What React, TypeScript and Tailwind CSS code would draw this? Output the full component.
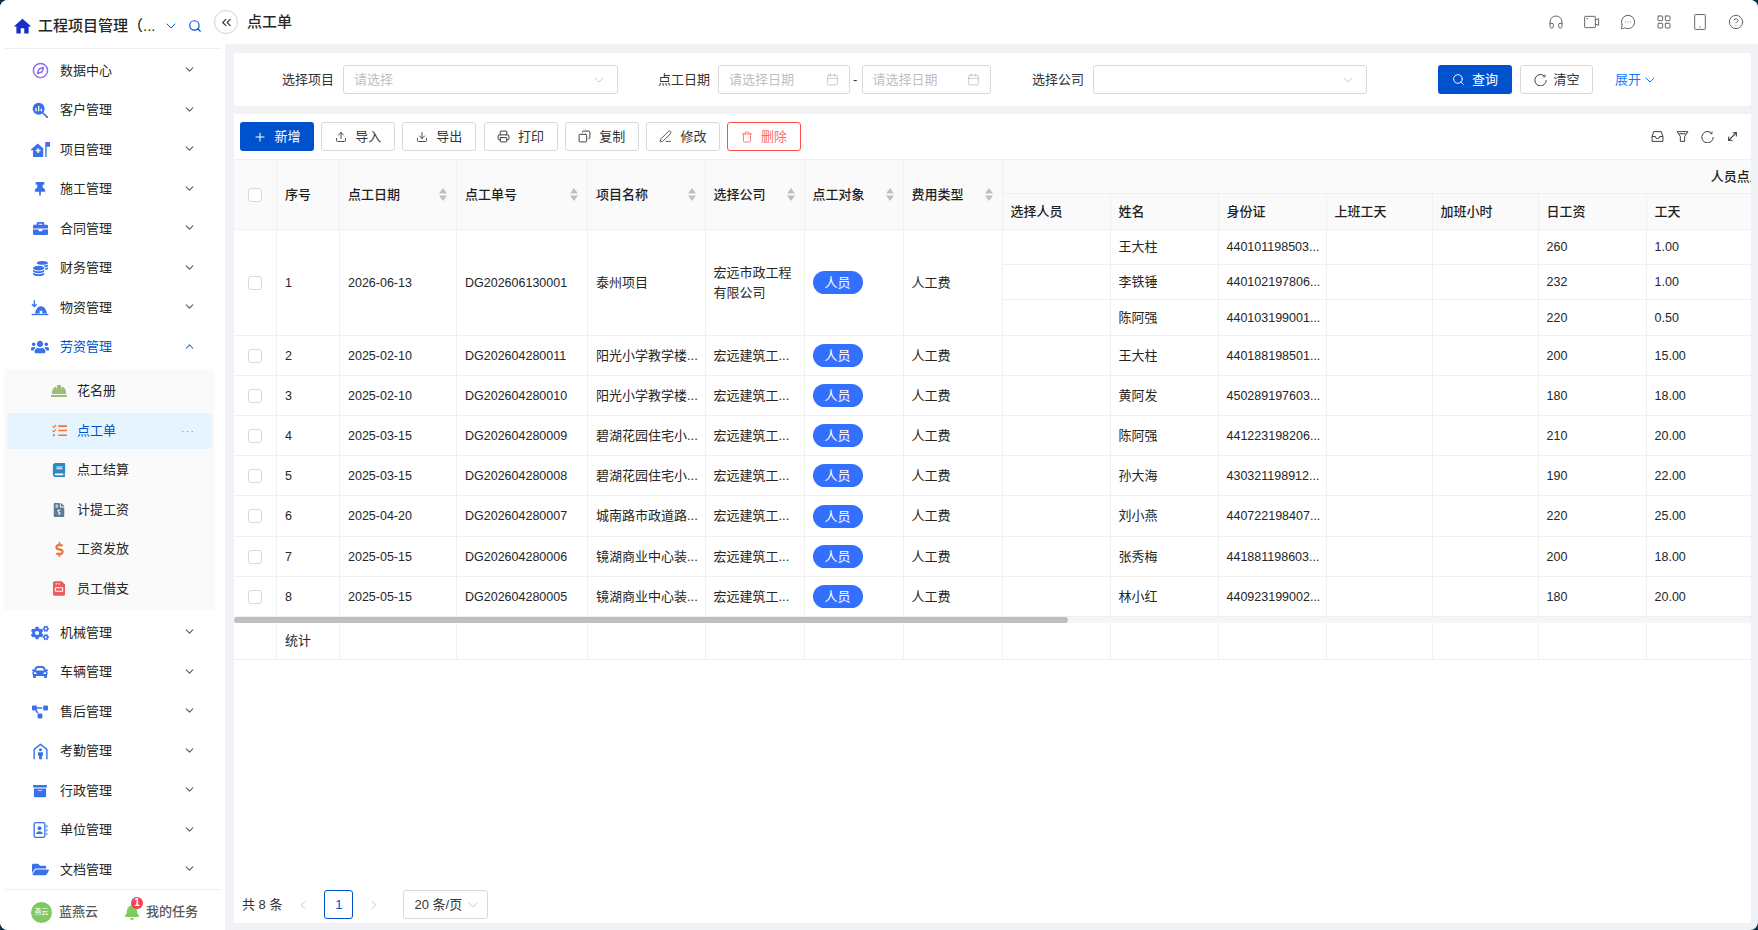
import React from 'react';
import {
  ChevronDown, ChevronUp, ChevronLeft, ChevronRight, ChevronsLeft, Search, Compass, Headphones, MessageCircleMore,
  LayoutGrid, CircleHelp, Calendar, Plus, Upload, Download, Printer, Copy, PenLine, Trash, MoveDiagonal,
} from 'lucide-react';
import {
  FaThumbtack, FaBriefcase, FaCoins, FaUsers, FaHardHat, FaBook, FaFileInvoiceDollar, FaDollarSign, FaCogs,
  FaCar, FaProjectDiagram, FaArchive, FaFolderOpen, FaBell,
} from 'react-icons/fa';
import { MdHome } from 'react-icons/md';

// custom icons that the packages don't have
const QueryChartIcon = () => (
  <svg width="16" height="16" viewBox="0 0 24 24">
    <circle cx="10" cy="10" r="9" fill="#3b71e8" />
    <path d="M6 9v5M10 6v8M14 10v4" stroke="#fff" strokeWidth="2" />
    <path d="M16.5 16.5L23 23" stroke="#3b71e8" strokeWidth="2.6" strokeLinecap="round" />
  </svg>
);

const HouseFlagIcon = () => (
  <svg width="19" height="17" viewBox="0 0 28 24">
    <path d="M0 12L10 3l8 7v13H3V13H0z" fill="#3b71e8" />
    <path d="M10.5 10v7M7 13.500h7" stroke="#fff" strokeWidth="2.2" />
    <path d="M21 1h7v7h-5v15h-2z" fill="#3b71e8" />
  </svg>
);

const TentArrowIcon = () => (
  <svg width="18" height="17" viewBox="0 0 27 24">
    <path d="M1 22.500h25" stroke="#3b71e8" strokeWidth="2" />
    <path d="M6 21c1-6 4-11 9-11s8 5 9 11h-7v-4h-4v4z" fill="#3b71e8" />
    <path d="M5 1v9M1.500 7L5 10.500 8.500 7" stroke="#3b71e8" strokeWidth="2" fill="none" />
  </svg>
);

const AttendanceIcon = () => (
  <svg width="15" height="17" viewBox="0 0 21 24" fill="none">
    <path d="M1.500 23V9L10.500 2l9 7v14" stroke="#3b71e8" strokeWidth="2" />
    <circle cx="10.500" cy="9.500" r="2.200" fill="#3b71e8" />
    <path d="M7 13h7v5h-1.500v5h-4v-5H7z" fill="#3b71e8" />
  </svg>
);

const AddressCardIcon = () => (
  <svg width="15" height="16" viewBox="0 0 21 24" fill="none">
    <rect x="1" y="1" width="16" height="22" rx="2.500" stroke="#3b71e8" strokeWidth="2" />
    <circle cx="9" cy="9.500" r="3" fill="#3b71e8" />
    <path d="M4 18c.5-3 2.500-4 5-4s4.500 1 5 4z" fill="#3b71e8" />
    <path d="M20 5v3M20 11v3M20 17v2" stroke="#3b71e8" strokeWidth="1.800" />
  </svg>
);

const CheckListIcon = () => (
  <svg width="15" height="13" viewBox="0 0 24 20" fill="none" stroke="#f0743e">
    <path d="M1 3l2 2 3.500-4M1 10l2 2 3.500-4" strokeWidth="1.800" />
    <circle cx="3" cy="17.500" r="1.800" fill="#f0743e" stroke="none" />
    <path d="M10 3h14M10 10h14M10 17.500h14" strokeWidth="2.600" />
  </svg>
);

const RedDocIcon = () => (
  <svg width="12" height="15" viewBox="0 0 18 22">
    <path d="M2.500 0H13l5 5v14.500a2.500 2.500 0 0 1-2.500 2.500h-13A2.500 2.500 0 0 1 0 19.500v-17A2.500 2.500 0 0 1 2.500 0z" fill="#ea5b5f" />
    <path d="M4 3h2v2H4zM8 3h2v2H8z" fill="#fff" />
    <rect x="3.500" y="10" width="11" height="5" rx="1" fill="none" stroke="#fff" strokeWidth="1.600" />
  </svg>
);

const VideoBoxIcon = () => (
  <svg width="16" height="16" viewBox="0 0 24 24" fill="none" stroke="#666" strokeWidth="1.500">
    <rect x="1" y="3.500" width="16" height="17" rx="1" />
    <path d="M17 9l5-2v10l-5-2M4 7h2" />
  </svg>
);

const PhoneIcon = () => (
  <svg width="16" height="16" viewBox="0 0 24 24" fill="none" stroke="#666" strokeWidth="1.500">
    <rect x="4" y="0.800" width="16" height="22.400" rx="1" />
    <path d="M11 19.500h2" />
  </svg>
);

const BoxIcon = () => (
  <svg width="13" height="13" viewBox="0 0 24 24" fill="none" stroke="#333" strokeWidth="1.750">
    <path d="M2 12L5 3h14l3 9v9H2z" />
    <path d="M2 12h6a4 4 0 0 0 8 0h6" />
  </svg>
);

const FunnelIcon = () => (
  <svg width="13" height="13" viewBox="0 0 24 24" fill="none" stroke="#333" strokeWidth="1.750">
    <path d="M2 3h20l-6 9v9H8v-9zM6 7h12" />
  </svg>
);

// open ring, the refresh glyph has almost no arrow head
const RefreshArc: React.FC<{ size: number }> = ({ size }) => (
  <svg width={size} height={size} viewBox="0 0 24 24" fill="none" stroke="currentColor" strokeWidth="1.750">
    <path d="M20 6.500A10.500 10.500 0 1 0 22.500 13" />
    <path d="M20.500 2.500v4.500h-4" strokeWidth="1.250" />
  </svg>
);

const SortCaret = () => (
  <svg width="8" height="13" viewBox="0 0 8 13" className="shrink-0" fill="#bfbfbf">
    <path d="M4 0l4 5.500H0zM4 13L0 7.500h8z" />
  </svg>
);

const CheckBox = () => <span className="block h-[14px] w-[14px] rounded-[3px] border border-[#d9d9d9] bg-white mx-auto" />;

interface MenuEntry {
  label: string;
  icon: React.ReactNode;
}

const blue = '#3b71e8';

const topMenus: MenuEntry[] = [
  { label: '数据中心', icon: <Compass size={17} color="#8b6cf6" strokeWidth={2} /> },
  { label: '客户管理', icon: <QueryChartIcon /> },
  { label: '项目管理', icon: <HouseFlagIcon /> },
  { label: '施工管理', icon: <FaThumbtack size={14} color={blue} /> },
  { label: '合同管理', icon: <FaBriefcase size={15} color={blue} /> },
  { label: '财务管理', icon: <FaCoins size={15} color={blue} /> },
  { label: '物资管理', icon: <TentArrowIcon /> },
];

const subMenus: MenuEntry[] = [
  { label: '花名册', icon: <FaHardHat size={16} color="#9dbd70" /> },
  { label: '点工单', icon: <CheckListIcon /> },
  { label: '点工结算', icon: <FaBook size={14} color="#2a8bc5" /> },
  { label: '计提工资', icon: <FaFileInvoiceDollar size={14} color="#5f7a99" /> },
  { label: '工资发放', icon: <FaDollarSign size={15} color="#f0743e" /> },
  { label: '员工借支', icon: <RedDocIcon /> },
];

const bottomMenus: MenuEntry[] = [
  { label: '机械管理', icon: <FaCogs size={18} color={blue} /> },
  { label: '车辆管理', icon: <FaCar size={16} color={blue} /> },
  { label: '售后管理', icon: <FaProjectDiagram size={16} color={blue} /> },
  { label: '考勤管理', icon: <AttendanceIcon /> },
  { label: '行政管理', icon: <FaArchive size={14} color={blue} /> },
  { label: '单位管理', icon: <AddressCardIcon /> },
  { label: '文档管理', icon: <FaFolderOpen size={17} color={blue} /> },
];

const MenuRow: React.FC<{ item: MenuEntry; open?: boolean }> = ({ item, open }) => (
  <div className="flex h-[39.5px] items-center pl-[30px] pr-[29px]">
    <span className="flex w-5 justify-center">{item.icon}</span>
    <span className={`ml-[10px] ${open ? 'text-[#0052cc]' : 'text-[#262626]'}`}>{item.label}</span>
    {open ? (
      <ChevronUp size={13} color="#3b71e8" strokeWidth={2} className="ml-auto -mt-0.5" />
    ) : (
      <ChevronDown size={13} color="#595959" strokeWidth={2} className="ml-auto -mt-0.5" />
    )}
  </div>
);

const Sidebar = () => (
  <aside className="flex w-[225px] shrink-0 flex-col bg-white text-[13px] leading-5">
    <div className="mx-1 flex h-[49px] shrink-0 items-center border-b border-[#f0f0f0] pl-[8px] pt-1">
      <MdHome size={21} color="#1530c8" />
      <span className="ml-[5px] w-[122px] whitespace-nowrap text-[15px] font-medium text-[#262626]">工程项目管理（...</span>
      <ChevronDown size={16} color="#0052cc" strokeWidth={1.5} className="ml-[3px]" />
      <Search size={14} color="#0052cc" strokeWidth={2} className="ml-[9px]" />
    </div>
    <div className="h-[840px] shrink-0 pt-[1.75px]">
      {topMenus.map(m => <MenuRow key={m.label} item={m} />)}
      <MenuRow item={{ label: '劳资管理', icon: <FaUsers size={18} color={blue} /> }} open />
      <div className="mx-1 mt-[2.500px] mb-[3px] flex w-[211px] flex-col gap-[3.5px] bg-[#fafafa] pt-1 pb-[3px]">
        {subMenus.map(m => {
          const active = m.label === '点工单';
          return (
            <div key={m.label} className={`mx-[3px] flex h-9 items-center rounded-[3px] pl-[42px] pr-[17px] ${active ? 'bg-[#e6f4ff]' : ''}`}>
              <span className="flex w-[20px] justify-center">{m.icon}</span>
              <span className={`ml-2 ${active ? 'text-[#0052cc]' : 'text-[#262626]'}`}>{m.label}</span>
              {active && <span className="ml-auto text-[11px] tracking-[1px] text-[#5b93e8]">···</span>}
            </div>
          );
        })}
      </div>
      {bottomMenus.map(m => <MenuRow key={m.label} item={m} />)}
    </div>
    <div className="mx-1 flex h-[41px] shrink-0 items-center border-t border-[#f0f0f0] pl-[27px] pt-[4px]">
      <span className="flex h-[21px] w-[21px] items-center justify-center rounded-full bg-[#82c860] text-[7px] text-white">燕云</span>
      <span className="ml-[7px] font-medium text-[#595959]">蓝燕云</span>
      <span className="relative ml-[26px] flex">
        <FaBell size={16} color="#7ecb5f" />
        <span className="absolute -top-[7px] left-[7px] flex h-[12px] w-[12px] items-center justify-center rounded-full bg-[#f5424d] text-[10px] font-bold leading-none text-white">1</span>
      </span>
      <span className="ml-[6px] font-medium text-[#595959]">我的任务</span>
    </div>
  </aside>
);

const Header = () => (
  <header className="flex h-11 shrink-0 items-center justify-between bg-white pl-[22px] pr-[14px]">
    <h1 className="text-[15px] font-medium text-[#262626]">点工单</h1>
    <div className="flex items-center gap-5 text-[#666]">
      <Headphones size={16} strokeWidth={1.5} />
      <VideoBoxIcon />
      <MessageCircleMore size={16} strokeWidth={1.5} />
      <LayoutGrid size={16} strokeWidth={1.5} />
      <PhoneIcon />
      <CircleHelp size={16} strokeWidth={1.5} />
    </div>
  </header>
);

const boxClass = 'flex h-[29px] items-center justify-between rounded-[3px] border border-[#d9d9d9] bg-white px-[10px]';

const DateBox: React.FC<{ className: string }> = ({ className }) => (
  <div className={`${boxClass} ${className}`}>
    <span className="text-[#bfbfbf]">请选择日期</span>
    <Calendar size={13} color="#bfbfbf" strokeWidth={1.5} />
  </div>
);

const SearchBar = () => (
  <section className="flex h-[53px] shrink-0 items-center rounded-[2px] bg-white pl-[48px] text-[13px] leading-5 text-[#333]">
    <span>选择项目</span>
    <div className={`${boxClass} ml-[9px] w-[275px]`}>
      <span className="text-[#bfbfbf]">请选择</span>
      <ChevronDown size={16} color="#bfbfbf" strokeWidth={1.25} />
    </div>
    <span className="ml-[40px]">点工日期</span>
    <DateBox className="ml-[8px] w-[131.500px]" />
    <span className="mx-[3.500px] w-[5px]">-</span>
    <DateBox className="w-[129.500px]" />
    <span className="ml-[41px]">选择公司</span>
    <div className={`${boxClass} ml-[9px] w-[274px] justify-end`}>
      <ChevronDown size={16} color="#bfbfbf" strokeWidth={1.25} />
    </div>
    <button className="ml-[71px] flex h-[29px] w-[74px] items-center justify-center gap-[7px] rounded-[3px] bg-[#0052cc] text-white">
      <Search size={13} strokeWidth={1.75} />
      查询
    </button>
    <button className="ml-[8px] flex h-[29px] w-[73px] items-center justify-center gap-[7px] rounded-[3px] border border-[#d9d9d9] text-[#333]">
      <RefreshArc size={13} />
      清空
    </button>
    <span className="ml-[22px] flex items-center gap-[1px] text-[#1677ff]">
      展开
      <ChevronDown size={16} strokeWidth={1.5} />
    </span>
  </section>
);

const toolButtons = [
  { label: '导入', icon: <Upload size={12} strokeWidth={1.75} /> },
  { label: '导出', icon: <Download size={12} strokeWidth={1.75} /> },
  { label: '打印', icon: <Printer size={13} strokeWidth={1.75} /> },
  { label: '复制', icon: <Copy size={13} strokeWidth={1.75} className="-scale-x-100" /> },
  { label: '修改', icon: <PenLine size={13} strokeWidth={1.5} /> },
];

const Toolbar = () => (
  <div className="mb-2 flex h-[29px] shrink-0 items-center pl-[6px] pr-[12px] text-[13px] leading-5">
    <div className="flex gap-[7.200px]">
      <button className="flex h-[29px] w-[74px] items-center justify-center gap-[7px] rounded-[3px] bg-[#0052cc] text-white">
        <Plus size={14} strokeWidth={1.75} />
        新增
      </button>
      {toolButtons.map(b => (
        <button key={b.label} className="flex h-[29px] w-[74px] items-center justify-center gap-2 rounded-[3px] border border-[#d9d9d9] text-[#333]">
          {b.icon}
          {b.label}
        </button>
      ))}
      <button className="flex h-[29px] w-[74px] items-center justify-center gap-2 rounded-[3px] border border-[#ff4d4f] text-[#ff6b6d]">
        <Trash size={12} strokeWidth={1.75} />
        删除
      </button>
    </div>
    <div className="ml-auto flex items-center gap-3 text-[#333]">
      <BoxIcon />
      <FunnelIcon />
      <RefreshArc size={13} />
      <MoveDiagonal size={13} strokeWidth={2} />
    </div>
  </div>
);

const columnWidths = [43, 63, 117, 131, 117.5, 99, 99, 99, 108, 108, 108, 106, 106, 108, 108, 717.5];
const tableWidth = 2238;

const Cols = () => (
  <colgroup>
    {columnWidths.map((w, i) => <col key={i} style={{ width: w }} />)}
  </colgroup>
);

const thBase = 'border-r border-b border-[#f0f0f0] bg-[#fafafa] px-2 font-medium text-[#1f1f1f]';
const th = `${thBase} text-left`;
const td = 'border-r border-b border-[#f0f0f0] px-2 text-[#262626] whitespace-nowrap';
const num = 'border-r border-b border-[#f0f0f0] px-2 text-[12.5px] text-[#262626] whitespace-nowrap';

const sortHeads = ['点工日期', '点工单号', '项目名称', '选择公司', '点工对象', '费用类型'];
const subHeads = ['选择人员', '姓名', '身份证', '上班工天', '加班小时', '日工资', '工天'];

interface Worker {
  name: string;
  idCard: string;
  wage: string;
  days: string;
}

const firstOrder: Worker[] = [
  { name: '王大柱', idCard: '440101198503...', wage: '260', days: '1.00' },
  { name: '李铁锤', idCard: '440102197806...', wage: '232', days: '1.00' },
  { name: '陈阿强', idCard: '440103199001...', wage: '220', days: '0.50' },
];

const orders = [
  { no: 2, date: '2025-02-10', code: 'DG202604280011', project: '阳光小学教学楼...', name: '王大柱', idCard: '440188198501...', wage: '200', days: '15.00' },
  { no: 3, date: '2025-02-10', code: 'DG202604280010', project: '阳光小学教学楼...', name: '黄阿发', idCard: '450289197603...', wage: '180', days: '18.00' },
  { no: 4, date: '2025-03-15', code: 'DG202604280009', project: '碧湖花园住宅小...', name: '陈阿强', idCard: '441223198206...', wage: '210', days: '20.00' },
  { no: 5, date: '2025-03-15', code: 'DG202604280008', project: '碧湖花园住宅小...', name: '孙大海', idCard: '430321198912...', wage: '190', days: '22.00' },
  { no: 6, date: '2025-04-20', code: 'DG202604280007', project: '城南路市政道路...', name: '刘小燕', idCard: '440722198407...', wage: '220', days: '25.00' },
  { no: 7, date: '2025-05-15', code: 'DG202604280006', project: '镜湖商业中心装...', name: '张秀梅', idCard: '441881198603...', wage: '200', days: '18.00' },
  { no: 8, date: '2025-05-15', code: 'DG202604280005', project: '镜湖商业中心装...', name: '林小红', idCard: '440923199002...', wage: '180', days: '20.00' },
];

const PersonTag = () => (
  <span className="block h-[23px] w-[50px] rounded-[12px] bg-[#3370ff] text-center leading-[23px] text-white">人员</span>
);

const WorkerCells: React.FC<{ w: Worker }> = ({ w }) => (
  <>
    <td className={td} />
    <td className={td}>{w.name}</td>
    <td className={num}>{w.idCard}</td>
    <td className={td} />
    <td className={td} />
    <td className={num}>{w.wage}</td>
    <td className={num}>{w.days}</td>
    <td className={td} />
  </>
);

const DataTable = () => (
  <div className="overflow-hidden">
    <table className="table-fixed border-separate border-spacing-0 text-[13px] leading-5" style={{ width: tableWidth }}>
      <Cols />
      <thead>
        <tr className="h-[35px]">
          <th rowSpan={2} className={`${th} border-t`}><CheckBox /></th>
          <th rowSpan={2} className={`${th} border-t`}>序号</th>
          {sortHeads.map(h => (
            <th key={h} rowSpan={2} className={`${th} border-t`}>
              <div className="flex items-center justify-between pr-[1px]">
                {h}
                <SortCaret />
              </div>
            </th>
          ))}
          <th colSpan={8} className={`${thBase} border-t text-center`}>人员点工</th>
        </tr>
        <tr className="h-9">
          {subHeads.map(h => <th key={h} className={th}>{h}</th>)}
          <th className={th} />
        </tr>
      </thead>
      <tbody>
        {firstOrder.map((w, i) => (
          <tr key={w.name} className={i === 2 ? 'h-9' : 'h-[35px]'}>
            {i === 0 && (
              <>
                <td rowSpan={3} className={td}><CheckBox /></td>
                <td rowSpan={3} className={num}>1</td>
                <td rowSpan={3} className={num}>2026-06-13</td>
                <td rowSpan={3} className={num}>DG202606130001</td>
                <td rowSpan={3} className={td}>泰州项目</td>
                <td rowSpan={3} className={td}>宏远市政工程<br />有限公司</td>
                <td rowSpan={3} className={td}><PersonTag /></td>
                <td rowSpan={3} className={td}>人工费</td>
              </>
            )}
            <WorkerCells w={w} />
          </tr>
        ))}
        {orders.map(o => (
          <tr key={o.no} className={o.no === 6 ? 'h-[41px]' : 'h-10'}>
            <td className={td}><CheckBox /></td>
            <td className={num}>{o.no}</td>
            <td className={num}>{o.date}</td>
            <td className={num}>{o.code}</td>
            <td className={td}>{o.project}</td>
            <td className={td}>宏远建筑工...</td>
            <td className={td}><PersonTag /></td>
            <td className={td}>人工费</td>
            <WorkerCells w={o} />
          </tr>
        ))}
      </tbody>
    </table>
    {/* horizontal scrollbar */}
    <div className="h-[6px] bg-[#f5f5f5]">
      <div className="h-[6px] w-[834px] rounded-[3px] bg-[#bfbfbf]" />
    </div>
    <table className="table-fixed border-separate border-spacing-0 text-[13px] leading-5" style={{ width: tableWidth }}>
      <Cols />
      <tbody>
        <tr className="h-[37px]">
          {columnWidths.map((_, i) => (
            <td key={i} className={td}>{i === 1 ? '统计' : ''}</td>
          ))}
        </tr>
      </tbody>
    </table>
  </div>
);

const Pager = () => (
  <div className="mt-auto flex h-[33px] shrink-0 items-start pl-2 text-[13px] leading-5 text-[#333]">
    <span className="flex h-[29px] items-center">共 8 条</span>
    <ChevronLeft size={14} color="#bfbfbf" strokeWidth={1.5} className="ml-[14px] mt-[8px]" />
    <span className="ml-[14px] flex h-[29px] w-[29px] items-center justify-center rounded-[3px] border border-[#0052cc] text-[#0052cc]">1</span>
    <ChevronRight size={14} color="#bfbfbf" strokeWidth={1.5} className="ml-[14px] mt-[8px]" />
    <div className="ml-[22px] flex h-[29px] w-[85px] items-center justify-between rounded-[3px] border border-[#d9d9d9] pl-[10px] pr-[6px]">
      20 条/页
      <ChevronDown size={16} color="#bfbfbf" strokeWidth={1.25} />
    </div>
  </div>
);

export default function App() {
  return (
    <div className="h-screen w-screen overflow-hidden bg-[#0c3247] [font-family:'Liberation_Sans','Noto_Sans_CJK_SC',sans-serif]">
      <div className="relative flex h-full overflow-hidden rounded-[8px] bg-[#f0f2f6]">
        <Sidebar />
        <main className="flex min-w-0 flex-1 flex-col">
          <Header />
          <div className="flex min-h-0 flex-1 flex-col gap-2 pb-[7px] pl-[9px] pr-[7px] pt-[9px]">
            <SearchBar />
            <section className="flex min-h-0 flex-1 flex-col overflow-hidden bg-white pt-2">
              <Toolbar />
              <DataTable />
              <Pager />
            </section>
          </div>
        </main>
        {/* collapse button sits over the sidebar edge */}
        <button className="absolute left-[214px] top-[10px] flex h-6 w-6 items-center justify-center rounded-full border border-[#d0d0d0] bg-white text-[#333]">
          <ChevronsLeft size={15} strokeWidth={1.75} />
        </button>
      </div>
    </div>
  );
}
